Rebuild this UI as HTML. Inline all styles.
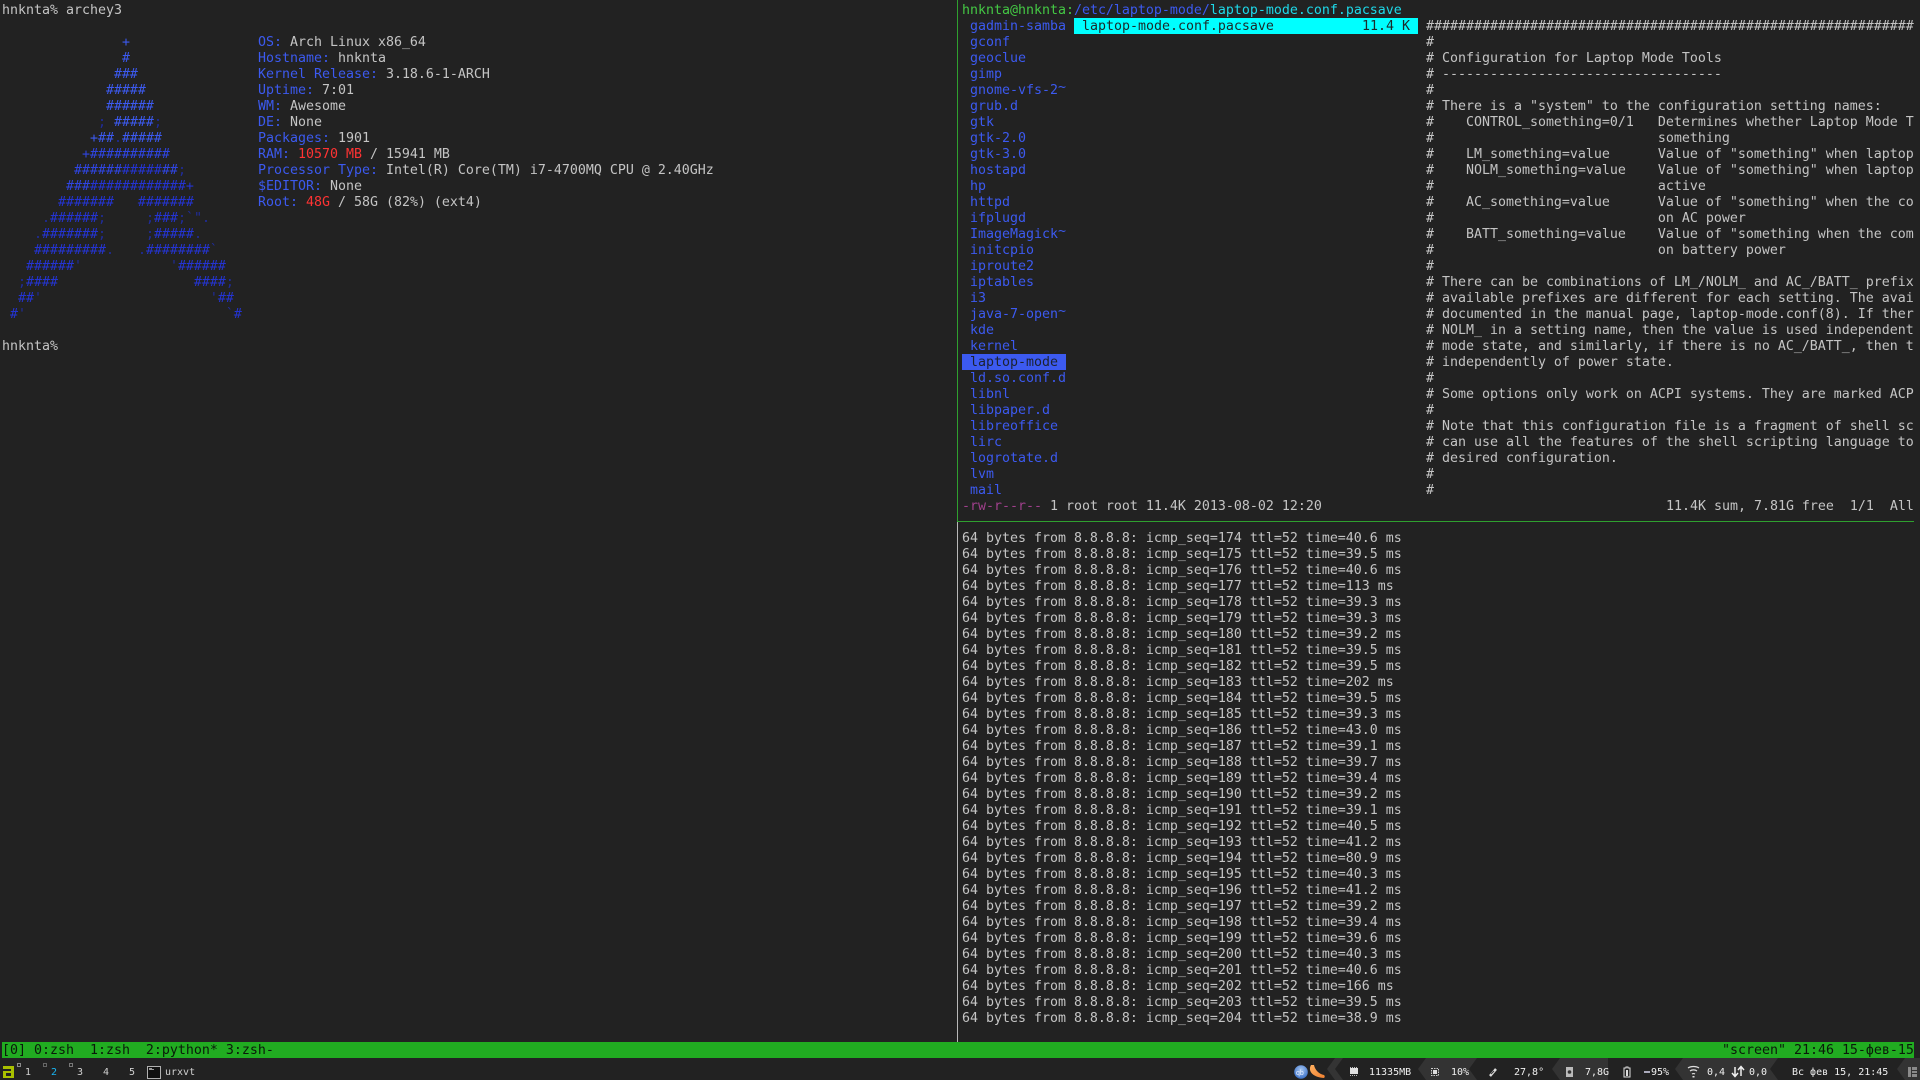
<!DOCTYPE html>
<html>
<head>
<meta charset="utf-8">
<title>Terminal</title>
<style>
html,body{margin:0;padding:0;background:#222;width:1920px;height:1080px;overflow:hidden}
body{position:relative;font-family:"DejaVu Sans Mono","Liberation Mono",monospace;color:#c4c4c4}
pre{position:absolute;margin:0;padding-top:1px;font:inherit;font-size:13.29px;line-height:16px;white-space:pre;overflow:hidden;font-kerning:none}
.b{color:#3c5af0}.m{color:#2f45e2}.d{color:#2434d2}.r{color:#ff3333}.g{color:#44c844}.p{color:#3c5af0}.c{color:#1ed8e8}
.f{color:#1f2c9c}
.u{position:relative;top:-3px}
.a{position:absolute}
.t{position:absolute;top:1065px;font-size:10px;line-height:16px;white-space:pre;color:#d0d0d0}
.w{color:#f0f0f0}
.sq{position:absolute;top:1063px;width:2px;height:2px;border:1px solid #8a8a8a}
</style>
</head>
<body>
<pre style="left:2px;top:2px;width:940px;height:360px">hnknta% archey3

<span class="b">               +
               #
              ###
             #####
             ######
            <span class="f">;</span> #####<span class="f">;</span>
           +##<span class="f">.</span>#####</span>
<span class="m">          +##########
         ######</span><span class="d">#####</span><span class="m">##<span class="f">;</span>
        ###</span><span class="d">############+
       #######   #######
     <span class="f">.</span>######<span class="f">;</span>     <span class="f">;</span>###<span class="f">;`".</span>
    <span class="f">.</span>#######<span class="f">;</span>     <span class="f">;</span>#####<span class="f">.</span>
    #########<span class="f">.</span>   <span class="f">.</span>########<span class="f">`</span>
   ######<span class="f">'</span>           <span class="f">'</span>######
  <span class="f">;</span>####                 ####<span class="f">;</span>
  ##<span class="f">'</span>                     <span class="f">'</span>##
 #<span class="f">'</span>                         <span class="f">`</span>#</span>

hnknta%</pre>

<pre style="left:258px;top:34px;width:660px;height:180px"><span class="b">OS:</span> Arch Linux x86_64
<span class="b">Hostname:</span> hnknta
<span class="b">Kernel Release:</span> 3.18.6-1-ARCH
<span class="b">Uptime:</span> 7:01
<span class="b">WM:</span> Awesome
<span class="b">DE:</span> None
<span class="b">Packages:</span> 1901
<span class="b">RAM:</span> <span class="r">10570 MB</span> / 15941 MB
<span class="b">Processor Type:</span> Intel(R) Core(TM) i7-4700MQ CPU @ 2.40GHz
<span class="b">$EDITOR:</span> None
<span class="b">Root:</span> <span class="r">48G</span> / 58G (82%) (ext4)</pre>

<!-- pane borders -->
<div class="a" style="left:957px;top:0;width:1px;height:522px;background:#2fa02f"></div>
<div class="a" style="left:957px;top:522px;width:1px;height:520px;background:#b8b8b8"></div>
<div class="a" style="left:957px;top:521px;width:957px;height:1px;background:#2fa02f"></div>

<pre style="left:962px;top:2px;width:952px;height:16px"><span class="g">hnknta@hnknta:</span><span style="color:#3c5af0">/etc/laptop-mode/</span><span class="c">laptop-mode.conf.pacsave</span></pre>

<!-- ranger left column -->
<div class="a" style="left:962px;top:354px;width:104px;height:16px;background:#3c5af0"></div>
<pre style="left:970px;top:18px;width:96px;height:480px" class="p">gadmin-samba
gconf
geoclue
gimp
gnome-vfs-2<span class="u">~</span>
grub.d
gtk
gtk-2.0
gtk-3.0
hostapd
hp
httpd
ifplugd
ImageMagick<span class="u">~</span>
initcpio
iproute2
iptables
i3
java-7-open<span class="u">~</span>
kde
kernel
<span style="color:#1c2230">laptop-mode</span>
ld.so.conf.d
libnl
libpaper.d
libreoffice
lirc
logrotate.d
lvm
mail</pre>

<!-- ranger middle -->
<div class="a" style="left:1074px;top:18px;width:344px;height:16px;background:#00ffff"></div>
<pre style="left:1082px;top:18px;width:328px;height:16px;color:#1c2a2a">laptop-mode.conf.pacsave<span style="position:absolute;right:0;top:1px">11.4 K</span></pre>

<!-- preview -->
<pre style="left:1426px;top:18px;width:488px;height:480px">#############################################################
#
# Configuration for Laptop Mode Tools
# -----------------------------------
#
# There is a "system" to the configuration setting names:
#    CONTROL_something=0/1   Determines whether Laptop Mode Tools
#                            something
#    LM_something=value      Value of "something" when laptop mode
#    NOLM_something=value    Value of "something" when laptop mode
#                            active
#    AC_something=value      Value of "something" when the computer
#                            on AC power
#    BATT_something=value    Value of "something when the computer
#                            on battery power
#
# There can be combinations of LM_/NOLM_ and AC_/BATT_ prefixes
# available prefixes are different for each setting. The available
# documented in the manual page, laptop-mode.conf(8). If there
# NOLM_ in a setting name, then the value is used independently
# mode state, and similarly, if there is no AC_/BATT_, then the
# independently of power state.
#
# Some options only work on ACPI systems. They are marked ACPI
#
# Note that this configuration file is a fragment of shell script
# can use all the features of the shell scripting language to
# desired configuration.
#
#</pre>

<!-- ranger status -->
<pre style="left:962px;top:498px;width:600px;height:16px"><span style="color:#a0408c">-rw-r--r--</span> 1 root root 11.4K 2013-08-02 12:20</pre>
<pre style="left:1666px;top:498px;width:248px;height:16px">11.4K sum, 7.81G free  1/1  All</pre>

<!-- ping -->
<pre style="left:962px;top:530px;width:950px;height:496px">64 bytes from 8.8.8.8: icmp_seq=174 ttl=52 time=40.6 ms
64 bytes from 8.8.8.8: icmp_seq=175 ttl=52 time=39.5 ms
64 bytes from 8.8.8.8: icmp_seq=176 ttl=52 time=40.6 ms
64 bytes from 8.8.8.8: icmp_seq=177 ttl=52 time=113 ms
64 bytes from 8.8.8.8: icmp_seq=178 ttl=52 time=39.3 ms
64 bytes from 8.8.8.8: icmp_seq=179 ttl=52 time=39.3 ms
64 bytes from 8.8.8.8: icmp_seq=180 ttl=52 time=39.2 ms
64 bytes from 8.8.8.8: icmp_seq=181 ttl=52 time=39.5 ms
64 bytes from 8.8.8.8: icmp_seq=182 ttl=52 time=39.5 ms
64 bytes from 8.8.8.8: icmp_seq=183 ttl=52 time=202 ms
64 bytes from 8.8.8.8: icmp_seq=184 ttl=52 time=39.5 ms
64 bytes from 8.8.8.8: icmp_seq=185 ttl=52 time=39.3 ms
64 bytes from 8.8.8.8: icmp_seq=186 ttl=52 time=43.0 ms
64 bytes from 8.8.8.8: icmp_seq=187 ttl=52 time=39.1 ms
64 bytes from 8.8.8.8: icmp_seq=188 ttl=52 time=39.7 ms
64 bytes from 8.8.8.8: icmp_seq=189 ttl=52 time=39.4 ms
64 bytes from 8.8.8.8: icmp_seq=190 ttl=52 time=39.2 ms
64 bytes from 8.8.8.8: icmp_seq=191 ttl=52 time=39.1 ms
64 bytes from 8.8.8.8: icmp_seq=192 ttl=52 time=40.5 ms
64 bytes from 8.8.8.8: icmp_seq=193 ttl=52 time=41.2 ms
64 bytes from 8.8.8.8: icmp_seq=194 ttl=52 time=80.9 ms
64 bytes from 8.8.8.8: icmp_seq=195 ttl=52 time=40.3 ms
64 bytes from 8.8.8.8: icmp_seq=196 ttl=52 time=41.2 ms
64 bytes from 8.8.8.8: icmp_seq=197 ttl=52 time=39.2 ms
64 bytes from 8.8.8.8: icmp_seq=198 ttl=52 time=39.4 ms
64 bytes from 8.8.8.8: icmp_seq=199 ttl=52 time=39.6 ms
64 bytes from 8.8.8.8: icmp_seq=200 ttl=52 time=40.3 ms
64 bytes from 8.8.8.8: icmp_seq=201 ttl=52 time=40.6 ms
64 bytes from 8.8.8.8: icmp_seq=202 ttl=52 time=166 ms
64 bytes from 8.8.8.8: icmp_seq=203 ttl=52 time=39.5 ms
64 bytes from 8.8.8.8: icmp_seq=204 ttl=52 time=38.9 ms</pre>

<!-- tmux status -->
<div class="a" style="left:2px;top:1042px;width:1912px;height:16px;background:#21ac21"></div>
<pre style="left:2px;top:1042px;width:600px;height:15px;color:#0a1a0a">[0] 0:zsh  1:zsh  2:python* 3:zsh-</pre>
<pre style="left:1722px;top:1042px;width:192px;height:15px;color:#0a1a0a">"screen" 21:46 15-фев-15</pre>

<!-- wibox left -->
<svg class="a" style="left:0;top:1058px" width="170" height="22" viewBox="0 0 170 22">
  <path d="M3 8h11v12H3v-7h8v-2H3z M6 15v3h5v-3z" fill="#a9c000" fill-rule="evenodd"/>
  <rect x="147.5" y="8.5" width="13" height="12" fill="#111" stroke="#b0b0b0"/>
  <path d="M149 10h3v1h2v1h-5z" fill="#999"/>
</svg>
<div class="sq" style="left:17px"></div>
<div class="sq" style="left:43px;border-color:#666"></div>
<div class="sq" style="left:69px;border-color:#777"></div>
<div class="t" style="left:25px">1</div>
<div class="t" style="left:51px;color:#19b4f0">2</div>
<div class="t" style="left:77px">3</div>
<div class="t" style="left:103px">4</div>
<div class="t" style="left:129px">5</div>
<div class="t" style="left:165px">urxvt</div>

<!-- wibox right -->
<svg class="a" style="left:1280px;top:1058px" width="640" height="22" viewBox="1280 1058 640 22">
  <defs>
    <radialGradient id="q" cx="50%" cy="35%" r="65%"><stop offset="0" stop-color="#a8c8f0"/><stop offset="1" stop-color="#3a70c8"/></radialGradient>
    <linearGradient id="o" x1="0" y1="0" x2="1" y2="1"><stop offset="0" stop-color="#ffb060"/><stop offset="1" stop-color="#f08030"/></linearGradient>
  </defs>
  <!-- lighter segments -->
  <path d="M1327 1069 1335 1058H1343L1335 1069 1343 1080H1335Z" fill="#343434"/>
  <path d="M1418 1069 1426 1058H1477L1469 1069 1477 1080H1426Z" fill="#333"/>
  <path d="M1552 1069 1560 1058H1608V1080H1560Z" fill="#333"/>
  <path d="M1675 1069 1683 1058H1778L1770 1069 1778 1080H1683Z" fill="#333"/>
  <path d="M1897 1069 1905 1058H1920V1080H1905Z" fill="#333"/>
  <!-- tray -->
  <circle cx="1301" cy="1072" r="6.8" fill="url(#q)"/>
  <text x="1296" y="1075" font-size="7" fill="#e8f0ff" font-family="Liberation Sans, sans-serif">qb</text>
  <path d="M1311 1065c-3 5 0 12 13 13 1-1 1-2 0-3-5-1-9-5-10-10z" fill="url(#o)"/>
  <!-- ram -->
  <path d="M1350 1068h8v6h-8z" fill="#e0e0e0"/>
  <path d="M1350 1075h1v1h-1zm2 0h1v1h-1zm2 0h1v1h-1zm2 0h1v1h-1zM1350 1067h1v1h-1zm2 0h1v1h-1zm2 0h1v1h-1zm2 0h1v1h-1z" fill="#bbb"/>
  <!-- cpu -->
  <path d="M1431.500 1068.500h7v7h-7z" fill="none" stroke="#ccc" stroke-dasharray="1.500 1"/>
  <rect x="1433" y="1070" width="4" height="4" fill="#ddd"/>
  <!-- temp -->
  <path d="M1490 1076l6-7" stroke="#ddd" stroke-width="2.500" fill="none"/>
  <path d="M1491 1074l3-3" stroke="#333" stroke-width="1" fill="none"/>
  <!-- disk -->
  <rect x="1566" y="1067" width="7" height="10" fill="#bbb"/>
  <circle cx="1569.500" cy="1072" r="1.800" fill="#333"/>
  <!-- battery -->
  <path d="M1626 1067h2v1h2v9h-6v-9h2z" fill="none" stroke="#ddd"/>
  <rect x="1626" y="1070" width="2" height="6" fill="#ddd"/>
  <path d="M1644 1072h6" stroke="#aab" stroke-width="2"/>
  <!-- wifi -->
  <path d="M1688 1068c3-2 8-2 11 0M1690 1071c2-1.500 5-1.500 7 0M1692 1074c1-.6 2-.6 3 0" stroke="#e0e0e0" fill="none" stroke-width="1.200"/>
  <rect x="1692.500" y="1076" width="2" height="1.500" fill="#e0e0e0"/>
  <!-- net arrows -->
  <path d="M1735 1067v9M1732 1073l3 3.500 3-3.500M1741 1076v-9M1738 1070l3-3.500 3 3.500" stroke="#f0f0f0" fill="none" stroke-width="1.500"/>
  <!-- layout -->
  <path d="M1908 1067h3v10h-3zM1912 1067h5v3h-5zM1912 1071h5v2h-5zM1912 1074h5v3h-5z" fill="#8a8a8a"/>
</svg>
<div class="t w" style="left:1369px">11335MB</div>
<div class="t w" style="left:1451px">10%</div>
<div class="t w" style="left:1514px">27,8°</div>
<div class="t w" style="left:1585px">7,8G</div>
<div class="t w" style="left:1651px">95%</div>
<div class="t w" style="left:1707px">0,4</div>
<div class="t w" style="left:1749px">0,0</div>
<div class="t w" style="left:1792px">Вс фев 15, 21:45</div>
</body>
</html>
